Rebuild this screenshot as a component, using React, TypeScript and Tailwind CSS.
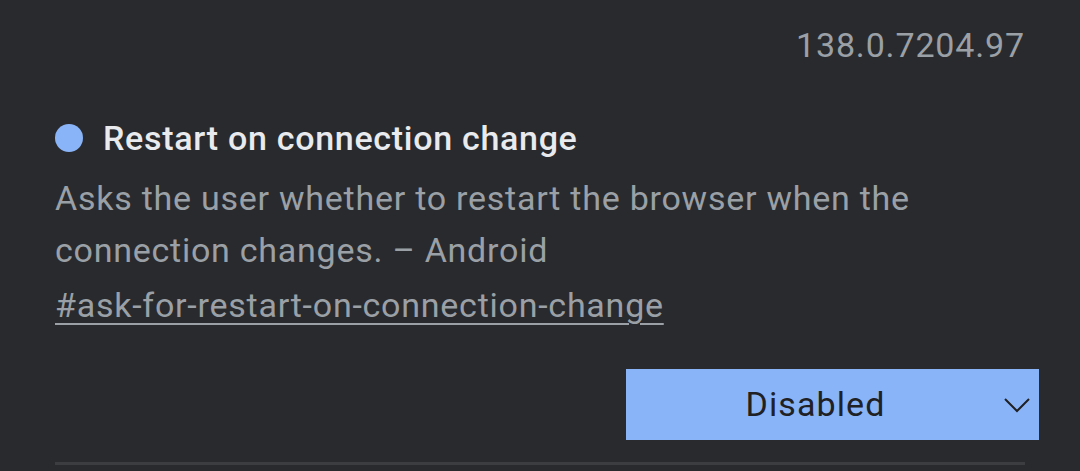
export default function App() {
  return (
    <main
      className="w-[1080px] h-[471px] overflow-hidden bg-[#292a2d] text-[#e8eaed]"
      style={{ fontFamily: "Roboto, 'Liberation Sans', sans-serif" }}
    >
      <div className="pl-[55px] pr-[55px]">
        <div className="flex justify-end pt-[22px]">
          <span className="text-[34px] leading-[46px] tracking-[0.85px] text-[#9aa0a6]">138.0.7204.97</span>
        </div>

        <div className="mt-[50px] flex items-center gap-[20px]">
          <span className="w-[28px] h-[28px] rounded-full bg-[#8ab4f8] shrink-0" />
          <h2 className="text-[34px] leading-[40px] font-medium tracking-[0.7px]">Restart on connection change</h2>
        </div>

        <p className="mt-[14px] text-[34px] leading-[52px] tracking-[0.75px] text-[#9aa0a6]">
          Asks the user whether to restart the browser when the
          <br />
          connection changes. – Android
        </p>

        <a className="block mt-[6px] text-[34px] leading-[46px] tracking-[0.75px] text-[#9aa0a6] underline underline-offset-[6px] decoration-[2px]">
          #ask-for-restart-on-connection-change
        </a>

        <div className="mt-[41px] flex justify-end -mr-[14px]">
          <button className="relative w-[413px] h-[71px] pr-[34px] bg-[#8ab4f8] text-[#202124] text-[34px] tracking-[1.1px]">
            Disabled
            <svg
              className="absolute right-[9px] top-[29px]"
              width="26"
              height="15"
              viewBox="0 0 26 15"
              fill="none"
              stroke="#202124"
              strokeWidth="2"
            >
              <polyline points="1,1 13,13 25,1" />
            </svg>
          </button>
        </div>

        <div className="mt-[22px] h-[3px] bg-[#3c3d41]" />
      </div>
    </main>
  );
}
